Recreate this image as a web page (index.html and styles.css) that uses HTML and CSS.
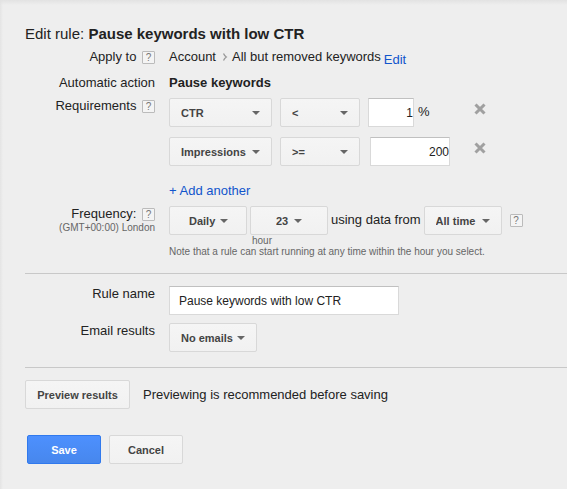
FILE: index.html
```html
<!DOCTYPE html>
<html lang="en">
<head>
<meta charset="utf-8">
<title>Edit rule</title>
<link rel="stylesheet" href="styles.css">
</head>
<body>
<form class="rule">
  <h1 class="title">Edit rule: <b>Pause keywords with low CTR</b></h1>

  <div class="row scope">
    <div class="label">Apply to <button type="button" class="help">?</button></div>
    <div class="path">
      <span>Account</span>
      <svg class="chevron" viewBox="0 0 6 8" width="6" height="8"><path d="M1.5 .5 C2.2 2.2 3.2 3.2 4.3 4 C3.2 4.8 2.2 5.8 1.5 7.5" fill="none" stroke="#999" stroke-width="1.3"/></svg>
      <span>All but removed keywords</span>
      <a class="edit" href="#">Edit</a>
    </div>
  </div>

  <div class="row action">
    <div class="label">Automatic action</div>
    <b>Pause keywords</b>
  </div>

  <div class="row">
    <div class="label">Requirements <button type="button" class="help">?</button></div>
    <div>
      <div class="requirements">
        <span class="drop"><select aria-label="Metric"><option>CTR</option></select></span>
        <span class="drop"><select aria-label="Comparison"><option>&lt;</option></select></span>
        <label class="value"><input class="field short" type="text" value="1" aria-label="Value"> %</label>
        <button type="button" class="remove" aria-label="Remove"><svg viewBox="0 0 12 12" width="12" height="12"><path d="M1.5 1.5 L10.5 10.5 M10.5 1.5 L1.5 10.5" fill="none" stroke="#a0a0a0" stroke-width="3"/></svg></button>

        <span class="drop"><select aria-label="Metric"><option>Impressions</option></select></span>
        <span class="drop"><select aria-label="Comparison"><option>&gt;=</option></select></span>
        <label class="value end"><input class="field long" type="text" value="200" aria-label="Value"></label>
        <button type="button" class="remove" aria-label="Remove"><svg viewBox="0 0 12 12" width="12" height="12"><path d="M1.5 1.5 L10.5 10.5 M10.5 1.5 L1.5 10.5" fill="none" stroke="#a0a0a0" stroke-width="3"/></svg></button>
      </div>
      <a class="add" href="#">+ Add another</a>
    </div>
  </div>

  <div class="row">
    <div class="label">Frequency: <button type="button" class="help">?</button>
      <div class="small">(GMT+00:00) London</div>
    </div>
    <div>
      <div class="schedule">
        <span class="drop daily"><select aria-label="Frequency"><option>Daily</option></select></span>
        <span class="drop hour"><select id="hour"><option>23</option></select></span>
        <label class="using" for="span">using data from</label>
        <span class="drop span"><select id="span"><option>All time</option></select></span>
        <button type="button" class="help">?</button>
        <label class="small unit" for="hour">hour</label>
      </div>
      <div class="small">Note that a rule can start running at any time within the hour you select.</div>
    </div>
  </div>

  <hr>

  <div class="row name">
    <label class="label" for="name">Rule name</label>
    <input class="field text" id="name" type="text" value="Pause keywords with low CTR">
  </div>
  <div class="row">
    <label class="label" for="email">Email results</label>
    <span class="drop email"><select id="email"><option>No emails</option></select></span>
  </div>

  <hr>

  <div class="preview">
    <button type="button" class="btn">Preview results</button>
    <span>Previewing is recommended before saving</span>
  </div>

  <div class="actions">
    <button type="button" class="btn save">Save</button>
    <button type="button" class="btn cancel">Cancel</button>
  </div>
</form>
</body>
</html>
```
FILE: styles.css
```css
* {
  box-sizing: border-box;
}

body {
  margin: 0;
  min-height: 100vh;
  background:
    linear-gradient(#e2e2e2, transparent) 0 0 / 100% 5px no-repeat,
    linear-gradient(to right, #e4e4e4, transparent) 0 0 / 3px 100% no-repeat,
    #eee;
  color: #222;
  font: 13px/16px "Liberation Sans", Arial, sans-serif;
}

a {
  color: #15c;
  text-decoration: none;
}

button,
input,
select {
  margin: 0;
  font-family: inherit;
}

.rule {
  padding: 24px 0 24px 25px;
}

.title {
  margin: 0 0 5px;
  font-size: 15px;
  font-weight: normal;
  line-height: 20px;
}

.row {
  display: grid;
  grid-template-columns: 130px 1fr;
  column-gap: 14px;
  align-items: start;
}

.scope {
  padding-bottom: 10px;
}

.action {
  padding-bottom: 7px;
}

.name {
  padding-bottom: 8px;
}

.label {
  text-align: right;
}

.small {
  color: #666;
  font-size: 10px;
  line-height: 12px;
}

.help {
  width: 13px;
  height: 13px;
  margin: 2px 0 0 2px;
  padding: 0;
  border: 1px solid #bbb;
  border-radius: 1px;
  background: #f4f4f4;
  color: #777;
  font-size: 10px;
  line-height: 11px;
  vertical-align: top;
}

.path {
  display: flex;
  align-items: center;
  height: 16px;
}

.chevron {
  margin: 0 4px 0 6px;
}

.edit {
  margin-left: 3px;
  padding-top: 6px;
}

.requirements {
  display: grid;
  grid-template-columns: 103px 80px 82px 28px;
  gap: 10px 8px;
}

.drop {
  display: block;
  position: relative;
}

.drop::after {
  content: "";
  position: absolute;
  top: 13px;
  right: 12px;
  border: 4px solid transparent;
  border-top-color: #666;
  border-bottom: 0;
  pointer-events: none;
}

.drop select,
.btn {
  height: 29px;
  border: 1px solid #d8d8d8;
  border-radius: 2px;
  background: linear-gradient(#f5f5f5, #f1f1f1);
  color: #444;
  font-size: 11px;
  font-weight: bold;
}

.drop select {
  display: block;
  appearance: none;
  width: 100%;
  padding: 0 0 0 11px;
}

.field {
  height: 29px;
  border: 1px solid #d9d9d9;
  border-top-color: #c0c0c0;
  border-radius: 0;
  background: #fff;
  color: #222;
  font-size: 12px;
}

.value {
  display: flex;
  gap: 4px;
  line-height: 28px;
}

.value .field {
  padding: 0;
  text-align: right;
}

.value.end {
  justify-content: flex-end;
}

.short {
  width: 46px;
}

.long {
  width: 80px;
}

.remove {
  height: 22px;
  padding: 0 0 0 16px;
  border: 0;
  background: none;
}

.remove svg {
  display: block;
}

.add {
  display: block;
  margin: 17px 0 7px;
}

.schedule {
  display: grid;
  grid-template-columns: 78px 78px auto 78px 18px;
  column-gap: 3px;
  justify-content: start;
  align-items: center;
}

.schedule .help {
  margin: 0 0 0 5px;
}

.using {
  padding-bottom: 2px;
}

.daily select {
  padding-left: 19px;
}

.daily::after {
  right: 19px;
}

.hour select {
  padding-left: 25px;
}

.hour::after {
  right: 26px;
}

.unit {
  grid-column: 2;
  padding-left: 2px;
  line-height: 11px;
}

hr {
  height: 1px;
  margin: 15px 0 12px;
  border: 0;
  background: #c8c8c8;
}

.text {
  width: 230px;
  padding: 0 9px;
}

.email {
  width: 88px;
}

.btn {
  width: 105px;
  padding: 0;
}

.preview {
  display: flex;
  align-items: center;
  gap: 13px;
}

.actions {
  display: flex;
  gap: 8px;
  margin: 26px 0 0 2px;
}

.actions .btn {
  width: 74px;
}

.actions .save {
  border-color: #3079ed;
  background: linear-gradient(#4d90fe, #4787ed);
  color: #fff;
}
```
